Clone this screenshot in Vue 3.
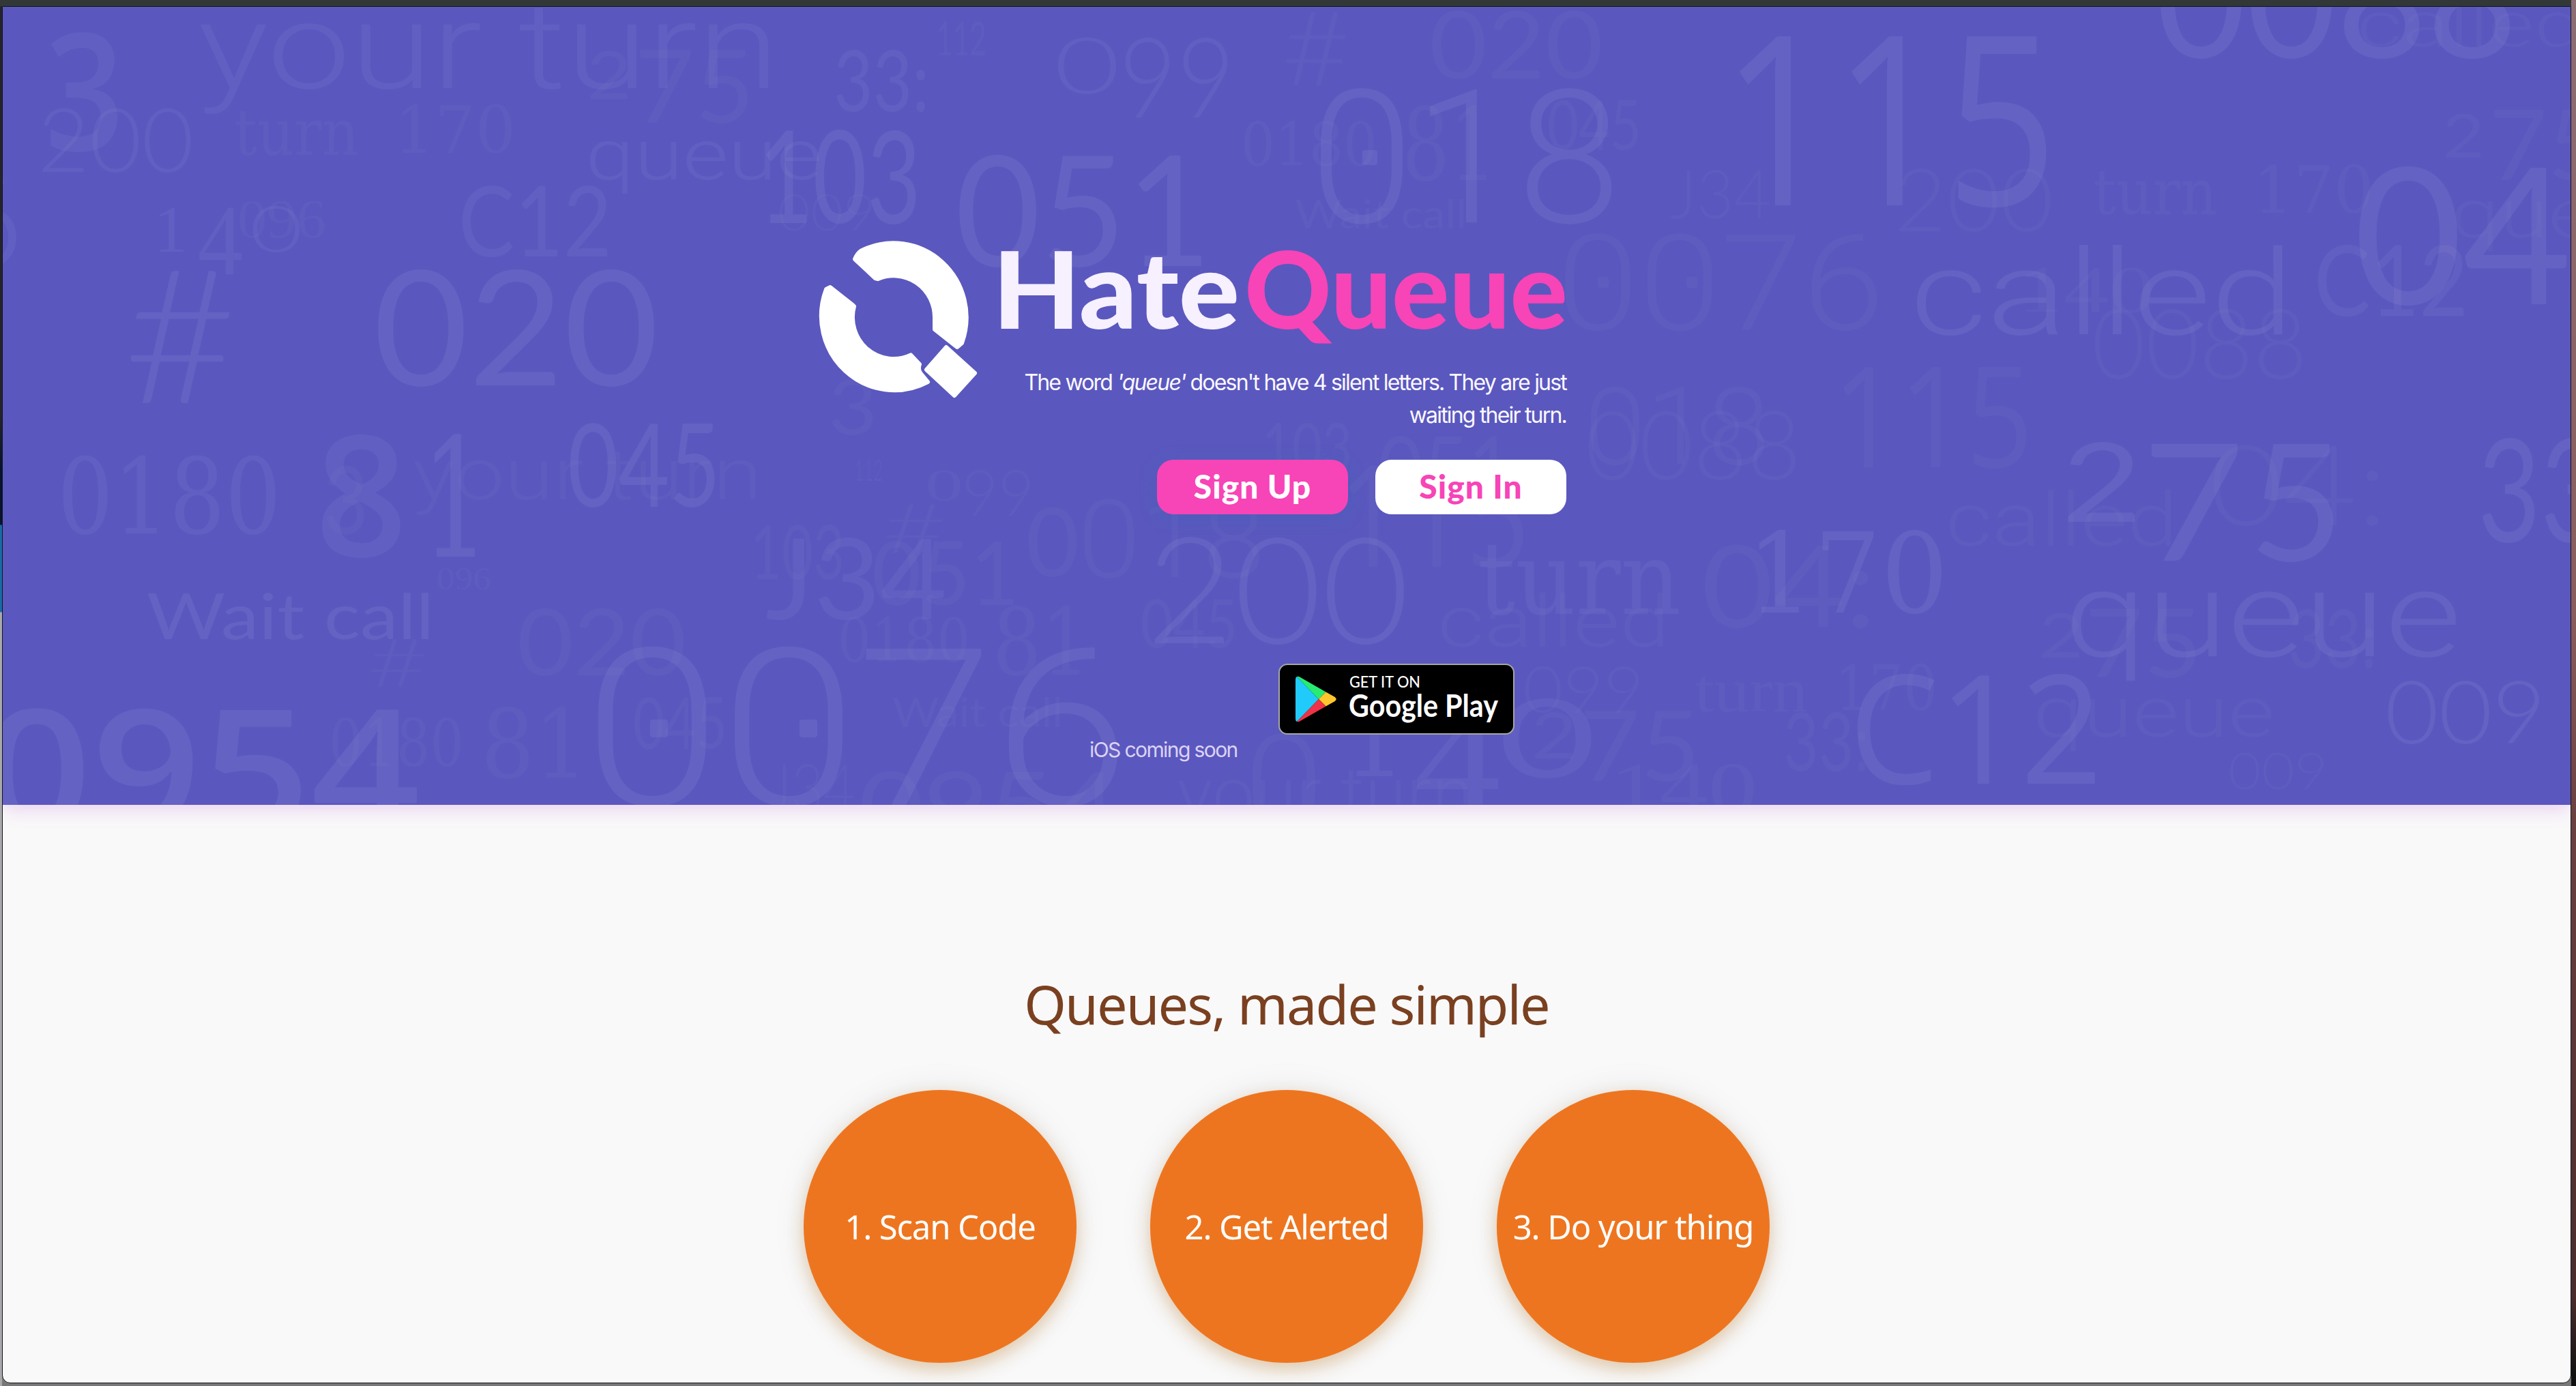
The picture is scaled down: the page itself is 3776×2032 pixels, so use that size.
<script setup>
// Typefaces used by the queue-ticket wallpaper, with cap / digit height and x-height per em
const faces = {
  sans: { family: 'Lato', weight: 400, cap: 0.72, ex: 0.506 },
  light: { family: 'Lato', weight: 300, cap: 0.72, ex: 0.506 },
  thin: { family: 'Roboto', weight: 300, cap: 0.711, ex: 0.528 },
  reg: { family: 'Open Sans', weight: 400, cap: 0.714, ex: 0.54 },
  bold: { family: 'Open Sans', weight: 600, cap: 0.714, ex: 0.54 },
  serif: { family: 'Liberation Serif', weight: 400, cap: 0.66, ex: 0.46 },
  slab: { family: 'DejaVu Serif', weight: 400, cap: 0.729, ex: 0.519 },
}

// [text, left, right, top, baseline, face, strength]; lowercase words measure top at x-height
const raw = [
  ['3', 66, 182, 50, 221, 'bold', 2],
  ['your turn', 290, 1142, 36, 129, 'thin', 2],
  ['200', 55, 284, 158, 252, 'light', 2],
  ['turn', 343, 526, 178, 227, 'slab', 1],
  ['170', 578, 756, 154, 224, 'slab', 1],
  ['2', 860, 926, 76, 145, 'sans', 1],
  ['75', 930, 1106, 72, 180, 'sans', 1],
  ['queue', 858, 1205, 208, 263, 'thin', 2],
  ['C12', 672, 897, 272, 376, 'sans', 2],
  ['020', 547, 966, 396, 565, 'sans', 3],
  ['#', 180, 348, 394, 591, 'light', 3],
  ['1', 225, 275, 304, 369, 'serif', 2],
  ['4', 290, 356, 304, 402, 'serif', 2],
  ['0', 366, 444, 302, 369, 'light', 2],
  ['096', 348, 478, 295, 348, 'serif', 1],
  ['6', -78, 34, 262, 390, 'thin', 2],
  ['0180', 84, 412, 670, 782, 'slab', 2],
  ['8', 462, 597, 640, 816, 'bold', 2],
  ['1', 618, 718, 640, 816, 'slab', 3],
  ['3', 474, 540, 684, 783, 'sans', 1],
  ['your turn', 605, 1117, 676, 732, 'thin', 1],
  ['045', 832, 1056, 621, 743, 'sans', 3],
  ['096', 640, 720, 833, 864, 'serif', 1],
  ['Wait call', 215, 636, 869, 937, 'sans', 3, 'cap'],
  ['#', 538, 628, 936, 1007, 'light', 1],
  ['020', 758, 1006, 892, 990, 'sans', 1],
  ['0954', -26, 616, 1041, 1216, 'bold', 3],
  ['0180', 482, 680, 1053, 1123, 'slab', 1],
  ['81', 705, 862, 1038, 1140, 'slab', 1],
  ['045', 928, 1066, 1023, 1098, 'sans', 1],
  ['0076', 856, 1656, 951, 1180, 'thin', 3],
  ['33:', 1222, 1362, 73, 163, 'sans', 2],
  ['112', 1372, 1446, 33, 81, 'sans', 1],
  ['0', 1545, 1642, 55, 137, 'light', 2],
  ['99', 1640, 1810, 55, 172, 'light', 2],
  ['103', 1112, 1350, 191, 327, 'sans', 3],
  ['009', 1140, 1284, 285, 338, 'light', 1],
  ['051', 1400, 1776, 228, 390, 'sans', 3],
  ['0180', 1819, 2019, 179, 243, 'slab', 1],
  ['#', 1878, 1980, 16, 126, 'light', 1],
  ['020', 2095, 2350, 16, 115, 'sans', 1],
  ['018', 1920, 2376, 132, 326, 'thin', 3],
  ['81', 2055, 2194, 157, 264, 'slab', 1],
  ['045', 2268, 2406, 147, 220, 'sans', 1],
  ['Wait call', 1898, 2150, 293, 335, 'sans', 1, 'cap'],
  ['J34', 2448, 2596, 249, 320, 'light', 1],
  ['115', 2524, 3016, 53, 301, 'reg', 3],
  ['200', 2776, 3010, 247, 339, 'light', 1],
  ['0076', 2282, 2762, 345, 483, 'thin', 1],
  ['0088', 3160, 3690, -86, 84, 'sans', 3],
  ['called', 3455, 3786, 19, 68, 'thin', 1],
  ['2', 3580, 3642, 166, 231, 'sans', 1],
  ['75', 3648, 3820, 160, 264, 'sans', 1],
  ['turn', 3068, 3250, 266, 314, 'slab', 1],
  ['170', 3303, 3480, 243, 312, 'slab', 1],
  ['04', 3450, 3770, 245, 446, 'sans', 3],
  ['queue', 3592, 3940, 295, 348, 'thin', 1],
  ['called', 2800, 3362, 398, 490, 'thin', 3],
  ['140', 2958, 3158, 392, 457, 'serif', 1],
  ['C12', 3392, 3618, 360, 463, 'sans', 2],
  ['0088', 3066, 3382, 452, 555, 'light', 1],
  ['115', 2686, 2980, 538, 685, 'reg', 1],
  ['called', 2852, 3192, 742, 800, 'thin', 1],
  ['04:', 3238, 3500, 653, 770, 'light', 1],
  ['2', 3022, 3140, 649, 765, 'sans', 3],
  ['7', 3140, 3290, 650, 822, 'sans', 3],
  ['5', 3296, 3436, 650, 822, 'sans', 3],
  ['33', 3632, 3816, 643, 794, 'sans', 3],
  ['queue', 3026, 3608, 869, 962, 'thin', 3],
  ['2', 2988, 3054, 898, 964, 'sans', 1],
  ['75', 3056, 3228, 892, 993, 'sans', 1],
  ['33:', 3354, 3484, 894, 979, 'sans', 1],
  ['C12', 2710, 3082, 991, 1149, 'reg', 3],
  ['queue', 2980, 3334, 1025, 1080, 'thin', 1],
  ['009', 3496, 3732, 997, 1090, 'light', 3],
  ['009', 3266, 3412, 1104, 1157, 'light', 1],
  ['018', 2322, 2594, 568, 680, 'thin', 1],
  ['0088', 2324, 2640, 602, 703, 'light', 1],
  ['115', 1962, 2242, 683, 831, 'reg', 1],
  ['051', 2020, 2218, 641, 735, 'sans', 1],
  ['103', 1850, 1982, 620, 690, 'sans', 1],
  ['200', 1680, 2066, 786, 943, 'light', 3],
  ['turn', 2166, 2464, 823, 900, 'slab', 2],
  ['04:', 2494, 2750, 800, 920, 'sans', 1],
  ['170', 2560, 2856, 780, 898, 'slab', 3],
  ['called', 2107, 2448, 892, 948, 'thin', 1],
  ['099', 2232, 2410, 977, 1045, 'light', 1],
  ['turn', 2484, 2650, 1001, 1043, 'serif', 1],
  ['170', 2690, 2840, 975, 1041, 'slab', 1],
  ['2', 2244, 2312, 1045, 1112, 'sans', 1],
  ['75', 2316, 2492, 1042, 1145, 'sans', 1],
  ['33:', 2614, 2740, 1045, 1130, 'sans', 1],
  ['1', 1968, 2062, 1025, 1138, 'slab', 2],
  ['4', 2072, 2200, 1040, 1190, 'serif', 2],
  ['0', 2196, 2340, 1025, 1140, 'sans', 2],
  ['140', 2360, 2576, 1120, 1192, 'serif', 1],
  ['0', 1824, 1940, 1077, 1220, 'thin', 1],
  ['your turn', 1725, 2160, 1144, 1200, 'thin', 1],
  ['3', 1214, 1286, 556, 637, 'sans', 1],
  ['0', 1356, 1412, 689, 734, 'serif', 1],
  ['99', 1410, 1516, 689, 756, 'light', 1],
  ['112', 1252, 1294, 675, 705, 'sans', 1],
  ['103', 1100, 1238, 770, 849, 'sans', 1],
  ['J34', 1122, 1388, 789, 908, 'sans', 2],
  ['#', 1292, 1388, 738, 811, 'light', 1],
  ['051', 1278, 1494, 794, 887, 'sans', 1],
  ['0', 1504, 1582, 744, 845, 'sans', 1],
  ['018', 1580, 1854, 732, 846, 'thin', 1],
  ['0180', 1228, 1422, 906, 970, 'slab', 1],
  ['81', 1455, 1598, 890, 989, 'slab', 1],
  ['Wait call', 1308, 1558, 1023, 1066, 'sans', 1, 'cap'],
  ['J34', 1126, 1254, 1120, 1190, 'light', 1],
  ['0954', 1258, 1640, 1132, 1232, 'sans', 1],
  ['045', 1672, 1814, 879, 950, 'sans', 1],
]

const strength = { 1: 0.026, 2: 0.046, 3: 0.062 }

// centre dots of the ticket-printer zeros: [x, y, width, height, strength]
const dots = [
  [953, 1055, 26, 26, 3],
  [1172, 1055, 26, 26, 3],
  [1997, 220, 22, 22, 3],
  [2342, 406, 16, 16, 1],
  [2472, 406, 16, 16, 1],
]

const marks = raw.map(([text, left, right, top, base, face, level, mode]) => {
  const f = faces[face]
  const lower = mode !== 'cap' && /[a-z]/.test(text)
  return {
    text,
    x: left,
    y: base,
    length: right - left,
    size: Math.round((base - top) / (lower ? f.ex : f.cap)),
    family: f.family,
    weight: f.weight,
    opacity: strength[level],
  }
})

const steps = ['1. Scan Code', '2. Get Alerted', '3. Do your thing']
</script>

<template>
  <div class="desktop">
    <div class="edge-left"></div>
    <main class="window">
      <section class="hero">
        <svg class="wallpaper" viewBox="4 10 3764 1170" aria-hidden="true">
          <text
            v-for="(m, i) in marks"
            :key="i"
            :x="m.x"
            :y="m.y"
            :textLength="m.length"
            lengthAdjust="spacingAndGlyphs"
            :font-size="m.size"
            :font-family="m.family"
            :font-weight="m.weight"
            :fill-opacity="m.opacity"
            fill="#fff"
          >{{ m.text }}</text>
          <rect
            v-for="(d, i) in dots"
            :key="'d' + i"
            :x="d[0]"
            :y="d[1]"
            :width="d[2]"
            :height="d[3]"
            rx="4"
            fill="#fff"
            :fill-opacity="strength[d[4]]"
          />
        </svg>

        <div class="intro">
          <svg class="logo" viewBox="1200 350 235 235">
            <g fill="#fff" stroke="#fff" stroke-width="6" stroke-linejoin="round">
              <path d="M1253 380 Q1256 372 1262 367.600 A107 109 0 0 1 1410 503 L1403 509 L1370 483 L1370 465 A60 61 0 0 0 1287 409 L1283 408 Z" />
              <path d="M1217 421 L1250 447 L1252 449 A60 61 0 0 0 1335 520.400 L1348 534 Q1345 542 1350 548 L1360 560 A107 109 0 0 1 1211 424 Z" />
              <path d="M1387 509 L1429 547 L1399 580 L1358 542 Z" />
            </g>
          </svg>
          <div class="pitch">
            <svg class="wordmark" viewBox="1460 350 836 170">
              <text x="1455" y="482" textLength="362" lengthAdjust="spacingAndGlyphs" fill="#f6f0ff">Hate</text>
              <text x="1824" y="482" textLength="474" lengthAdjust="spacingAndGlyphs" fill="#f744b7">Queue</text>
            </svg>
            <p class="tagline">The word <em>'queue'</em> doesn't have 4 silent letters. They are just<br />waiting their turn.</p>
            <div class="actions">
              <button class="btn up">Sign Up</button>
              <button class="btn in">Sign In</button>
            </div>
          </div>
        </div>

        <div class="stores">
          <span class="ios">iOS coming soon</span>
          <svg class="badge" viewBox="1874 973 346 104">
            <rect x="1875" y="974" width="344" height="102" rx="12" fill="#000" stroke="#a6a6a6" stroke-width="2" />
            <path d="M1901 992 Q1899 993 1899 996 V1054 Q1899 1057 1901 1058 L1933 1025 Z" fill="#20cbfb" />
            <path d="M1901 992 Q1903 991 1906 993 L1943.500 1014.500 L1933 1025 Z" fill="#28eb72" />
            <path d="M1943.500 1014.500 L1956 1021.500 Q1961.500 1025 1956 1028.500 L1943.500 1035.500 L1933 1025 Z" fill="#fdc62c" />
            <path d="M1901 1058 Q1903 1059 1906 1057 L1943.500 1035.500 L1933 1025 Z" fill="#ee3348" />
            <text x="1978" y="1008" font-size="23" font-weight="500" textLength="104" lengthAdjust="spacingAndGlyphs">GET IT ON</text>
            <text x="1977" y="1051" font-size="45" font-weight="700" textLength="219" lengthAdjust="spacingAndGlyphs">Google Play</text>
          </svg>
        </div>
      </section>

      <section class="simple">
        <h2>Queues, made simple</h2>
        <div class="steps">
          <div v-for="s in steps" :key="s" class="step">{{ s }}</div>
        </div>
      </section>
    </main>
    <div class="edge-right"></div>
  </div>
</template>

<style>
body {
  margin: 0;
  overflow: hidden;
}
</style>

<style scoped>
.desktop {
  box-sizing: border-box;
  width: 3776px;
  height: 2032px;
  display: flex;
  background: linear-gradient(#323737 0 9px, #777 9px);
}
.edge-left {
  width: 3px;
  margin-top: 9px;
  background: linear-gradient(#25242c 0 600px, #07142c 680px 760px, #1b6aa8 761px 888px, #a9a9ab 889px);
}
.edge-right {
  width: 7px;
  background: linear-gradient(#8c6d74, #8a5d5c 900px, #6b4040 1200px, #4a2c2c 1900px, #111 2020px);
}
.window {
  box-sizing: border-box;
  width: 3766px;
  height: 2019px;
  margin-top: 9px;
  border: 1px solid #11131c;
  border-radius: 0 0 12px 12px;
  background: #f9f9f9;
  overflow: hidden;
}
.hero {
  position: relative;
  box-sizing: border-box;
  height: 1170px;
  padding: 340px 0 0 1196px;
  background: #5a58be;
  box-shadow: 0 4px 28px rgba(190, 100, 220, 0.3);
}
.wallpaper {
  position: absolute;
  inset: 0;
  width: 3764px;
  height: 1170px;
}
.intro {
  position: relative;
  display: flex;
  width: 1096px;
}
.logo {
  flex: none;
  width: 235px;
  height: 235px;
}
.pitch {
  margin-left: 25px;
  width: 836px;
}
.wordmark {
  display: block;
  width: 836px;
  height: 170px;
  overflow: visible;
  font-family: Lato, sans-serif;
  font-weight: 900;
  font-size: 157px;
}
.tagline {
  margin: 17px 0 0;
  font: 400 32px/48px Inter, sans-serif;
  letter-spacing: -1.8px;
  text-align: right;
  white-space: nowrap;
  color: #fbf7ff;
}
.actions {
  display: flex;
  justify-content: flex-end;
  gap: 40px;
  margin-top: 41px;
}
.btn {
  width: 280px;
  height: 80px;
  padding: 0 0 2px;
  border: 0;
  border-radius: 24px;
  font: 900 48px/78px Lato, sans-serif;
  letter-spacing: 1px;
}
.up {
  background: #f744b7;
  color: #fff;
  box-shadow: 0 4px 24px rgba(50, 110, 180, 0.35);
}
.in {
  background: #fff;
  color: #f744b7;
}
.stores {
  position: relative;
  display: flex;
  align-items: flex-start;
  margin: 219px 0 0 397px;
}
.ios {
  width: 277px;
  margin-top: 106px;
  font: 400 30px/40px Inter, sans-serif;
  letter-spacing: -1.6px;
  white-space: nowrap;
  color: #ddd2f6;
}
.badge {
  width: 346px;
  height: 104px;
  fill: #fff;
  font-family: Lato, sans-serif;
}
.simple {
  display: flex;
  flex-direction: column;
  align-items: center;
  padding-top: 244px;
}
h2 {
  margin: 0;
  font: 400 79px/96px 'Noto Sans', sans-serif;
  letter-spacing: -1.9px;
  color: #7a4020;
  white-space: nowrap;
}
.steps {
  display: flex;
  gap: 108px;
  margin-top: 78px;
}
.step {
  display: flex;
  align-items: center;
  justify-content: center;
  width: 400px;
  height: 400px;
  border-radius: 50%;
  background: #ee751f;
  box-shadow: 0 0 50px rgba(0, 0, 0, 0.08), 0 10px 24px rgba(200, 120, 20, 0.3);
  font: 400 49px/60px 'Noto Sans', sans-serif;
  letter-spacing: -1.15px;
  color: #fff;
  white-space: nowrap;
}
</style>
